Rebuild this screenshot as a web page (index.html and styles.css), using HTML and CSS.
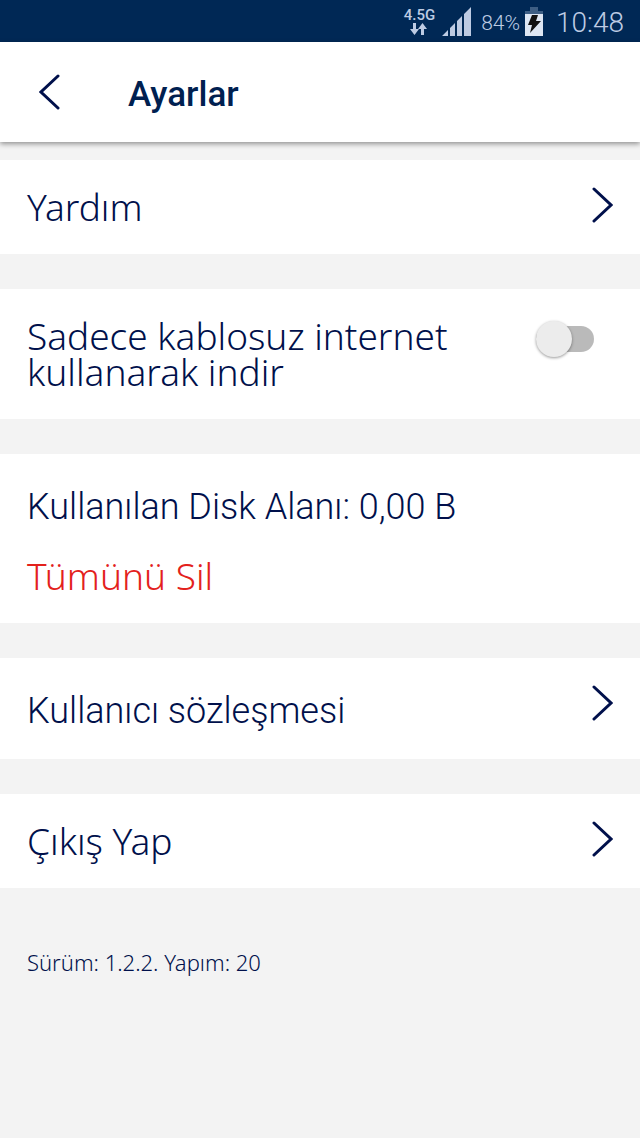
FILE: index.html
```
<!DOCTYPE html>
<html lang="tr">
<head>
    <meta charset="UTF-8">
    <meta name="viewport" content="width=device-width, initial-scale=1.0">
    <title>Ayarlar</title>
    <link rel="stylesheet" href="styles.css">
</head>
<body>
    <div class="status-bar">
        <div class="network">
            <span>4.5G</span>
            <svg width="18" height="12" viewBox="0 0 18 12">
                <path d="M3 0h3v6h3l-4.500 6L0 6h3z M11 12h3V6h3l-4.500-6L8 6h3z"/>
            </svg>
        </div>
        <svg class="signal" width="29" height="29" viewBox="0 0 29 29">
            <path d="M0 29L6 23V29z M8 21L13 16V29H8z M15 14L20 9V29H15z M22 7L29 0V29H22z"/>
        </svg>
        <span class="percent">84%</span>
        <svg class="battery" width="18" height="29" viewBox="0 0 18 29">
            <path fill="#3d5e84" d="M5 0h8v4h5v4H0V4h5z"/>
            <path fill="#dde6f3" d="M0 7h18v22H0z"/>
            <path fill="#111" d="M7 8h6l-2 6h5L5 26l2-8H3z"/>
        </svg>
        <time class="clock">10:48</time>
    </div>
    <header class="header">
        <a href="#" class="back" aria-label="Geri">
            <svg width="22" height="36" viewBox="0 0 22 36">
                <path d="M19 2L2 18L19 34"/>
            </svg>
        </a>
        <h1>Ayarlar</h1>
    </header>
    <main class="settings">
        <a href="#" class="card row">
            <span>Yardım</span>
            <svg class="chevron" width="22" height="36" viewBox="0 0 22 36"><path d="M3 2L20 18L3 34"/></svg>
        </a>
        <div class="card row wifi">
            <label for="wifi-only">Sadece kablosuz internet kullanarak indir</label>
            <input type="checkbox" role="switch" id="wifi-only" class="switch">
        </div>
        <div class="card storage">
            <p>Kullanılan Disk Alanı: 0,00 B</p>
            <button type="button">Tümünü Sil</button>
        </div>
        <a href="#" class="card row agreement">
            <span>Kullanıcı sözleşmesi</span>
            <svg class="chevron" width="22" height="36" viewBox="0 0 22 36"><path d="M3 2L20 18L3 34"/></svg>
        </a>
        <a href="#" class="card row">
            <span>Çıkış Yap</span>
            <svg class="chevron" width="22" height="36" viewBox="0 0 22 36"><path d="M3 2L20 18L3 34"/></svg>
        </a>
    </main>
    <footer class="version">Sürüm: 1.2.2. Yapım: 20</footer>
</body>
</html>
```
FILE: styles.css
```
* {
    box-sizing: border-box;
}
body {
    margin: 0;
    background-color: #f3f3f3;
    color: #00104b;
    font-family: "Noto Sans", sans-serif;
    font-size: 37px;
    font-weight: 300;
    line-height: 36px;
}
a {
    color: inherit;
    text-decoration: none;
}
svg {
    display: block;
    flex-shrink: 0;
}
.status-bar {
    display: flex;
    justify-content: flex-end;
    align-items: center;
    height: 42px;
    padding: 0 16px;
    background-color: #002855;
    color: #bdcbe3;
    fill: #bdcbe3;
    font-family: Roboto, sans-serif;
}
.network {
    display: flex;
    flex-direction: column;
    align-items: center;
    font-size: 15px;
    font-weight: 500;
    line-height: 16px;
}
.signal {
    margin-left: 7px;
}
.percent {
    margin: 3px 0 0 10px;
    font-size: 21px;
    font-weight: 350;
}
.battery {
    margin-left: 5px;
}
.clock {
    margin: 3px 0 0 13px;
    font-size: 28px;
    font-weight: 350;
}
.header {
    display: flex;
    align-items: center;
    height: 100px;
    padding: 0 39px;
    background-color: #fff;
    box-shadow: 0 2px 5px rgba(0, 0, 0, 0.4);
    color: #002050;
    font-family: Roboto, sans-serif;
}
.header h1 {
    margin: 5px 0 0 67px;
    font-size: 35px;
    font-weight: 500;
}
.back path,
.chevron path {
    fill: none;
    stroke: #00104b;
    stroke-width: 3;
    stroke-linecap: round;
}
.settings {
    display: flex;
    flex-direction: column;
    gap: 35px;
    margin-top: 18px;
}
.card {
    padding: 27px 27px 28px;
    background-color: #fff;
}
.row {
    display: flex;
    justify-content: space-between;
    align-items: flex-start;
}
.row span {
    padding-top: 2px;
    padding-bottom: 1px;
}
.wifi {
    padding-right: 46px;
}
.wifi label {
    max-width: 440px;
    margin: 2px 0 1px;
}
.switch {
    appearance: none;
    flex-shrink: 0;
    display: flex;
    align-items: center;
    width: 58px;
    height: 26px;
    margin: 10px 0 0;
    border-radius: 13px;
    background-color: #bababa;
    cursor: pointer;
}
.switch::before {
    content: "";
    width: 36px;
    height: 36px;
    border-radius: 50%;
    background-color: #ececec;
    box-shadow: 0 1px 3px rgba(0, 0, 0, 0.4);
}
.switch:checked::before {
    margin-left: auto;
}
.storage {
    padding: 35px 27px 29px;
}
.storage p {
    margin: 0 0 33px;
    font-family: Roboto, sans-serif;
    font-size: 36px;
    font-weight: 350;
}
.storage button {
    display: block;
    padding: 0;
    border: none;
    background: none;
    color: #e3211c;
    font: inherit;
    cursor: pointer;
}
.agreement {
    padding-bottom: 29px;
    font-family: Roboto, sans-serif;
    font-size: 36px;
    font-weight: 350;
}
.agreement span {
    padding-top: 8px;
}
.version {
    padding: 56px 27px;
    font-size: 22px;
}
```
